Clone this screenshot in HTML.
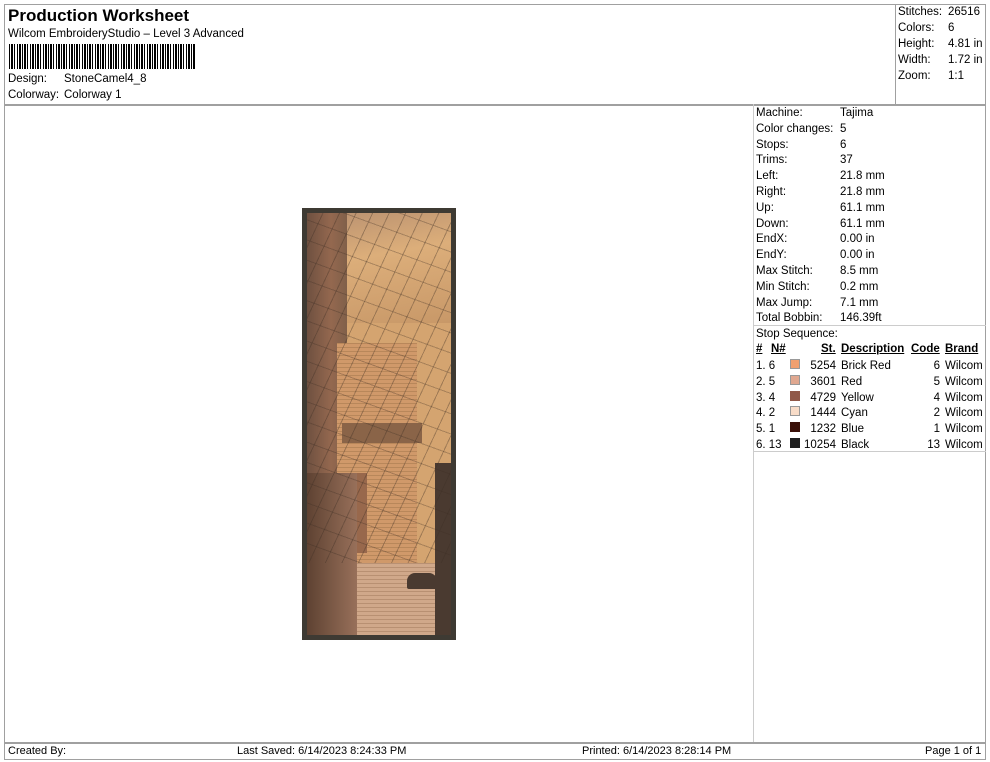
<!DOCTYPE html>
<html><head><meta charset="utf-8"><style>
*{margin:0;padding:0;box-sizing:border-box}
body{width:990px;height:762px;background:#fff;font-family:"Liberation Sans",Arial,sans-serif;font-size:11.5px;color:#000;position:relative;overflow:hidden}
.a{position:absolute;white-space:nowrap}
.l{position:absolute;background:#a0a0a0}
.bc{position:absolute;left:9px;top:44px;height:25px;width:186px;background:repeating-linear-gradient(90deg,#000 0 1px,#fff 1px 2px,#000 2px 4px,#fff 4px 5px,#000 5px 6px,#fff 6px 8px,#000 8px 9px,#fff 9px 10px,#000 10px 12px,#fff 12px 13px)}
.sw{position:absolute;width:10px;height:10px}
</style></head><body>
<div class="l" style="left:4px;top:4px;width:982px;height:1px"></div>
<div class="l" style="left:4px;top:4px;width:1px;height:756px"></div>
<div class="l" style="left:985px;top:4px;width:1px;height:756px"></div>
<div class="l" style="left:4px;top:759px;width:982px;height:1px"></div>
<div class="l" style="left:4px;top:104px;width:982px;height:2px"></div>
<div class="l" style="left:895px;top:4px;width:1px;height:100px"></div>
<div class="l" style="left:753px;top:104px;width:1px;height:639px;background:#ccc"></div>
<div class="l" style="left:753px;top:325px;width:233px;height:1px;background:#ccc"></div>
<div class="l" style="left:753px;top:451px;width:233px;height:1px;background:#ccc"></div>
<div class="l" style="left:4px;top:742px;width:982px;height:2px"></div>

<div class="a" style="left:8px;top:6px;font-size:17px;font-weight:bold">Production Worksheet</div>
<div class="a" style="left:8px;top:28px">Wilcom EmbroideryStudio – Level 3 Advanced</div>
<div class="bc"></div>
<div class="a" style="left:8px;top:73px">Design:</div><div class="a" style="left:64px;top:73px">StoneCamel4_8</div>
<div class="a" style="left:8px;top:89px">Colorway:</div><div class="a" style="left:64px;top:89px">Colorway 1</div>

<div class="a" style="left:898px;top:6px">Stitches:</div><div class="a" style="left:948px;top:6px">26516</div>
<div class="a" style="left:898px;top:22px">Colors:</div><div class="a" style="left:948px;top:22px">6</div>
<div class="a" style="left:898px;top:38px">Height:</div><div class="a" style="left:948px;top:38px">4.81 in</div>
<div class="a" style="left:898px;top:54px">Width:</div><div class="a" style="left:948px;top:54px">1.72 in</div>
<div class="a" style="left:898px;top:70px">Zoom:</div><div class="a" style="left:948px;top:70px">1:1</div>

<div class="a" style="left:756px;top:106px;line-height:15.8px">Machine:<br>Color changes:<br>Stops:<br>Trims:<br>Left:<br>Right:<br>Up:<br>Down:<br>EndX:<br>EndY:<br>Max Stitch:<br>Min Stitch:<br>Max Jump:<br>Total Bobbin:<br>Stop Sequence:</div>
<div class="a" style="left:840px;top:106px;line-height:15.8px">Tajima<br>5<br>6<br>37<br>21.8 mm<br>21.8 mm<br>61.1 mm<br>61.1 mm<br>0.00 in<br>0.00 in<br>8.5 mm<br>0.2 mm<br>7.1 mm<br>146.39ft</div>

<div class="a" style="left:756px;top:343px;font-weight:bold;text-decoration:underline">#</div>
<div class="a" style="left:771px;top:343px;font-weight:bold;text-decoration:underline">N#</div>
<div class="a" style="left:821px;top:343px;font-weight:bold;text-decoration:underline">St.</div>
<div class="a" style="left:841px;top:343px;font-weight:bold;text-decoration:underline">Description</div>
<div class="a" style="left:911px;top:343px;font-weight:bold;text-decoration:underline">Code</div>
<div class="a" style="left:945px;top:343px;font-weight:bold;text-decoration:underline">Brand</div>
<div class="a" style="left:756px;top:359px;line-height:15.8px">1. 6<br>2. 5<br>3. 4<br>4. 2<br>5. 1<br>6. 13</div>
<div class="a" style="left:800px;top:359px;width:36px;text-align:right;line-height:15.8px">5254<br>3601<br>4729<br>1444<br>1232<br>10254</div>
<div class="a" style="left:841px;top:359px;line-height:15.8px">Brick Red<br>Red<br>Yellow<br>Cyan<br>Blue<br>Black</div>
<div class="a" style="left:900px;top:359px;width:40px;text-align:right;line-height:15.8px">6<br>5<br>4<br>2<br>1<br>13</div>
<div class="a" style="left:945px;top:359px;line-height:15.8px">Wilcom<br>Wilcom<br>Wilcom<br>Wilcom<br>Wilcom<br>Wilcom</div>
<div class="sw" style="left:790px;top:359px;background:#f0a070;border:1px solid #999"></div>
<div class="sw" style="left:790px;top:375px;background:#e0a890;border:1px solid #999"></div>
<div class="sw" style="left:790px;top:391px;background:#905848"></div>
<div class="sw" style="left:790px;top:406px;background:#f8dcc8;border:1px solid #999"></div>
<div class="sw" style="left:790px;top:422px;background:#3a1008"></div>
<div class="sw" style="left:790px;top:438px;background:#202020"></div>

<!-- embroidery -->
<div class="a" style="left:302px;top:208px;width:154px;height:432px;background:#3e3a33"></div>
<div class="a" style="left:307px;top:213px;width:144px;height:422px;background:#d4a470;overflow:hidden">
 <div class="a" style="left:0;top:0;width:144px;height:110px;background:linear-gradient(170deg,#b89070,#dcae7a 40%,#c89868)"></div>
 <div class="a" style="left:0;top:0;width:40px;height:422px;background:linear-gradient(90deg,#6e5040,#94684f 60%,#80604a)"></div>
 <div class="a" style="left:30px;top:130px;width:80px;height:220px;background:repeating-linear-gradient(0deg,#d0996a 0 3px,#b8875a 3px 4px)"></div>
 <div class="a" style="left:35px;top:210px;width:80px;height:20px;background:#8a6448"></div>
 <div class="a" style="left:40px;top:260px;width:20px;height:80px;background:#98684c"></div>
 <div class="a" style="left:0;top:260px;width:50px;height:162px;background:linear-gradient(90deg,#5e4232,#98705a)"></div>
 <div class="a" style="left:50px;top:350px;width:94px;height:72px;background:repeating-linear-gradient(0deg,#d0a88a 0 3px,#b89072 3px 4px)"></div>
 <div class="a" style="left:100px;top:360px;width:30px;height:16px;background:#4a3a30;border-radius:8px 8px 2px 2px"></div>
 <div class="a" style="left:128px;top:250px;width:16px;height:172px;background:#4a3a30"></div>
 <div class="a" style="left:0;top:0;width:144px;height:350px;background:repeating-linear-gradient(115deg,transparent 0 14px,rgba(60,45,35,.35) 14px 15px),repeating-linear-gradient(20deg,transparent 0 18px,rgba(60,45,35,.3) 18px 19px)"></div>
</div>

<div class="a" style="left:8px;top:745px;font-size:11px">Created By:</div>
<div class="a" style="left:237px;top:745px;font-size:11px">Last Saved: 6/14/2023 8:24:33 PM</div>
<div class="a" style="left:582px;top:745px;font-size:11px">Printed: 6/14/2023 8:28:14 PM</div>
<div class="a" style="left:925px;top:745px;font-size:11px">Page 1 of 1</div>
</body></html>
